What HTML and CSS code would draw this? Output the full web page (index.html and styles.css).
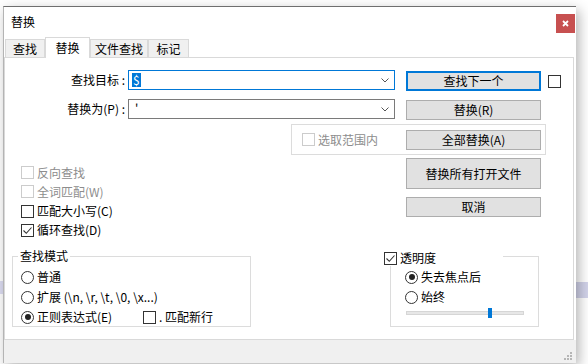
FILE: index.html
```html
<!DOCTYPE html>
<html lang="zh-CN">
<head>
  <meta charset="UTF-8">
  <title>替换</title>
  <link rel="stylesheet" href="styles.css">
</head>
<body>
  <div class="win">
    <div class="titlebar">
      <span class="title">替换</span>
      <span class="close"><svg width="7" height="7" viewBox="0 0 7 7"><path d="M1 1L6 6M6 1L1 6" stroke="#fff" stroke-width="1.8"/></svg></span>
    </div>
    <div class="tabs">
      <span class="tab t1">查找</span>
      <span class="tab sel">替换</span>
      <span class="tab t3">文件查找</span>
      <span class="tab t4">标记</span>
    </div>
    <div class="panel">
      <div class="row">
        <span class="lbl">查找目标 :</span>
        <div class="combo focus">
          <span class="hl">$</span>
          <svg width="8" height="5" viewBox="0 0 8 5"><path d="M0.5 0.5L4 4L7.5 0.5" fill="none" stroke="#555"/></svg>
        </div>
        <span class="btn def">查找下一个</span>
        <span class="cb side"></span>
      </div>
      <div class="row r2">
        <span class="lbl">替换为(P) :</span>
        <div class="combo">
          <span class="val">'</span>
          <svg width="8" height="5" viewBox="0 0 8 5"><path d="M0.5 0.5L4 4L7.5 0.5" fill="none" stroke="#555"/></svg>
        </div>
        <span class="btn">替换(R)</span>
      </div>
      <div class="range">
        <span class="chk dis"><span class="cb"></span>选取范围内</span>
        <span class="btn">全部替换(A)</span>
      </div>
      <div class="mid">
        <div class="opts">
          <span class="chk dis"><span class="cb"></span>反向查找</span>
          <span class="chk dis"><span class="cb"></span>全词匹配(W)</span>
          <span class="chk"><span class="cb"></span>匹配大小写(C)</span>
          <span class="chk"><span class="cb"><svg width="11" height="11" viewBox="0 0 11 11"><path d="M1.5 5.5L4.3 8.3L9.5 2.5" fill="none" stroke="#333" stroke-width="1.1"/></svg></span>循环查找(D)</span>
        </div>
        <div class="btns">
          <span class="btn tall">替换所有打开文件</span>
          <span class="btn">取消</span>
        </div>
      </div>
      <div class="bottom">
        <fieldset class="grp mode">
          <legend>查找模式</legend>
          <div class="opt"><span class="rd"></span>普通</div>
          <div class="opt"><span class="rd"></span>扩展 (\n, \r, \t, \0, \x...)</div>
          <div class="opt"><span class="rd on"></span><span class="w">正则表达式(E)</span><span class="chk"><span class="cb"></span>. 匹配新行</span></div>
        </fieldset>
        <fieldset class="grp trans">
          <legend><span class="cb"><svg width="11" height="11" viewBox="0 0 11 11"><path d="M1.5 5.5L4.3 8.3L9.5 2.5" fill="none" stroke="#333" stroke-width="1.1"/></svg></span>透明度</legend>
          <div class="opt"><span class="rd on"></span>失去焦点后</div>
          <div class="opt"><span class="rd"></span>始终</div>
          <div class="slider"><span class="track"></span><span class="thumb"></span></div>
        </fieldset>
      </div>
    </div>
    <div class="status">
      <svg width="8" height="8" viewBox="0 0 8 8" fill="#b5b5b5"><rect x="6" y="0" width="2" height="2"/><rect x="3" y="3" width="2" height="2"/><rect x="6" y="3" width="2" height="2"/><rect x="0" y="6" width="2" height="2"/><rect x="3" y="6" width="2" height="2"/><rect x="6" y="6" width="2" height="2"/></svg>
    </div>
  </div>
</body>
</html>
```

FILE: styles.css
```css
* { box-sizing: border-box; }
body {
  margin: 0; height: 364px; overflow: hidden;
  font: 12px/16px "Noto Sans CJK SC", "Microsoft YaHei", sans-serif; color: #000;
  background: linear-gradient(#d2d3ea, #d2d3ea) 576px 282px / 12px 16px no-repeat,
              linear-gradient(#dcdcf2, #dcdcf2) 0 281px / 3px 13px no-repeat, #fff;
}
.win { width: 573px; height: 357px; margin: 6px 0 0 3px; background: #fff; border-top: 1px solid #6f6f6f; border-left: 1px solid #b4b4b4; box-shadow: 3px 4px 12px rgba(0,0,0,.3); display: flex; flex-direction: column; }

.titlebar { height: 30px; display: flex; align-items: flex-start; }
.title { padding: 7px 0 0 7px; }
.close { margin: 7px 1px 0 auto; width: 19px; height: 19px; background: #c75050; display: flex; align-items: center; justify-content: center; }

.tabs { height: 20px; display: flex; align-items: flex-end; padding-left: 1px; }
.tab { height: 18px; padding-top: 1px; border: 1px solid #d9d9d9; border-bottom: 0; background: #f0f0f0; text-align: center; }
.t1 { width: 40px; }
.sel { width: 45px; height: 21px; padding-top: 2px; background: #fff; margin-bottom: -1px; position: relative; z-index: 1; }
.t3 { width: 58px; }
.t4 { width: 41px; }

.panel { width: 570px; height: 283px; border: 1px solid #d9d9d9; padding-top: 12px; }

.row { display: flex; height: 21px; }
.r2 { margin-top: 8px; }
.lbl { width: 120px; text-align: right; line-height: 20px; }
.combo { width: 267px; height: 20px; margin-left: 3px; border: 1px solid #7a7a7a; display: flex; align-items: center; padding-left: 3px; }
.combo.focus { border-color: #0078d7; }
.combo svg { margin-left: auto; margin-right: 5px; }
.hl { background: #0078d7; color: #fff; line-height: 14px; padding: 0 1px; }
.val { padding-left: 3px; }

.btn { display: block; width: 135px; height: 20px; margin: 1px 0 0 11px; background: #e1e1e1; border: 1px solid #adadad; text-align: center; line-height: 18px; }
.btn.def { border: 2px solid #0078d7; line-height: 16px; }

.chk { display: flex; align-items: center; }
.cb { flex: none; width: 13px; height: 13px; border: 1px solid #333; background: #fff; margin-right: 3px; display: flex; align-items: center; justify-content: center; }
.cb.side { margin: 5px 0 0 7px; }
.dis { color: #8d8d8d; }
.dis .cb { border-color: #cccccc; }

.range { margin: 4px 0 0 286px; width: 255px; height: 31px; border: 1px solid #dcdcdc; display: flex; align-items: center; padding: 0 4px 0 10px; }
.range .btn { margin: 0 0 0 auto; }

.mid { display: flex; height: 93px; }
.opts { margin-left: 16px; padding-top: 8px; width: 385px; }
.opts .chk { height: 19.25px; }
.btns { width: 135px; }
.btns .btn { margin: 8px 0 0; }
.btns .tall { height: 31px; margin-top: 3px; line-height: 29px; }

.bottom { display: flex; align-items: flex-start; }
.grp { margin: 0; padding: 4px 0 0; border: 1px solid #dcdcdc; min-width: 0; }
.grp legend { padding: 0 2px; margin-left: 5px; line-height: 16px; }
.mode { width: 239px; margin-left: 7px; }
.opt { display: flex; align-items: center; height: 18px; margin-left: 8px; }
.opt + .opt { margin-top: 2px; }
.opt .w { width: 106px; }
.rd { flex: none; width: 13px; height: 13px; border-radius: 50%; border: 1px solid #333; margin-right: 3px; display: flex; align-items: center; justify-content: center; }
.rd.on::after { content: ""; width: 6px; height: 6px; border-radius: 50%; background: #222; }

.trans { width: 149px; margin: -2px 0 0 139px; padding-top: 2px; }
.trans legend { margin-left: -7px; width: 119px; height: 20px; padding: 4px 0 0; display: flex; align-items: center; background: #fff; }
.trans .opt { margin-left: 14px; }
.slider { position: relative; display: flex; align-items: center; width: 118px; height: 10px; margin: 2px 0 8px 15px; }
.track { flex: 1; height: 4px; background: #e7e7e7; border: 1px solid #d6d6d6; }
.thumb { position: absolute; left: 82px; top: 0; width: 4px; height: 10px; background: #0078d7; }

.status { flex: 1; background: #f0f0f0; display: flex; justify-content: flex-end; align-items: flex-end; padding: 0 4px 3px 0; }
```
